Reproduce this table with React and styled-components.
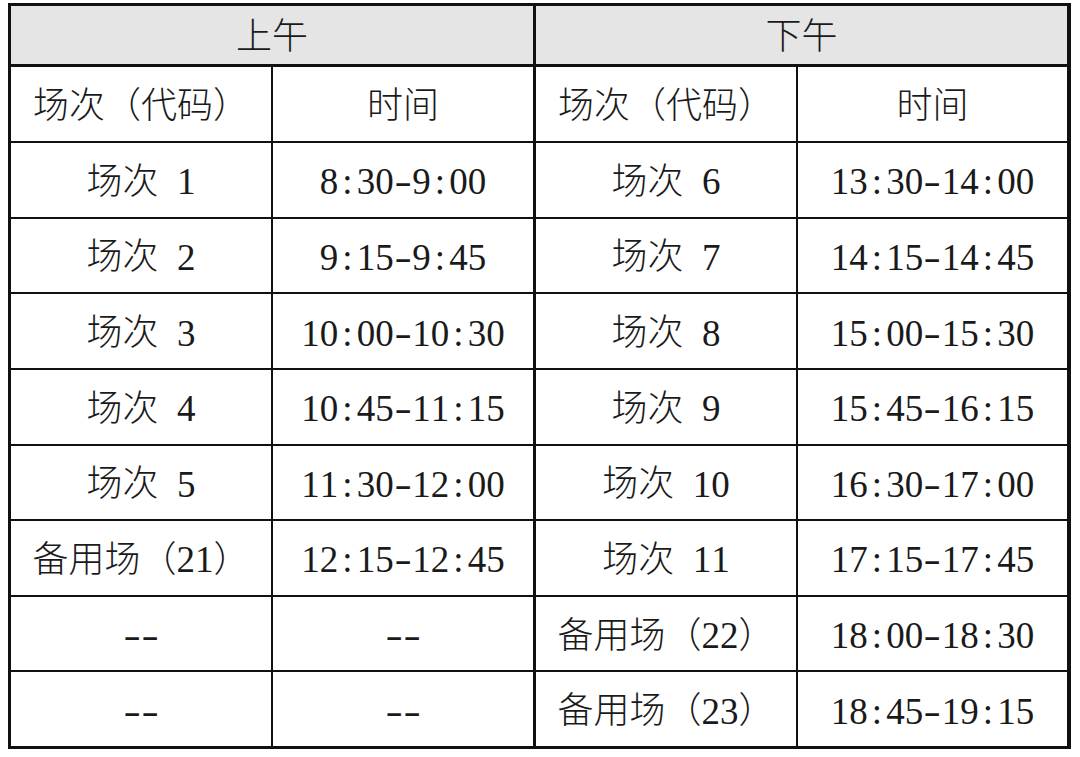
import React from "react";
import styled, { createGlobalStyle } from "styled-components";

const Global = createGlobalStyle`
  html, body { margin: 0; padding: 0; background: #ffffff; }
  body { font-family: "Liberation Serif", "Noto Sans CJK SC", serif; }
`;

const Page = styled.div`
  padding: 3px 0 0 8px;
  width: 1080px;
  height: 757px;
  box-sizing: border-box;
`;

const Table = styled.div`
  display: grid;
  grid-template-columns: 260px 261px 260px 269px;
  grid-template-rows: 59px 74px repeat(8, 1fr);
  gap: 2px;
  width: 1063px;
  height: 746px;
  box-sizing: border-box;
  background: #111;
  border-style: solid;
  border-color: #111;
  border-width: 3px 4px 3px 3px;
`;

const Cell = styled.div`
  display: flex;
  align-items: center;
  justify-content: center;
  box-sizing: border-box;
  background: ${(p) => (p.$head ? "#e5e5e5" : "#ffffff")};
  grid-column: ${(p) => (p.$span ? `span ${p.$span}` : "auto")};
  border-right: ${(p) => (p.$mid ? "1px solid #111" : "0")};
  border-bottom: ${(p) => (p.$head ? "1px solid #111" : "0")};
  color: #1a1a1a;
  font-family: "Liberation Serif", "Noto Sans CJK SC", serif;
  font-weight: 300;
  font-size: 36px;
  line-height: 1;
  padding-top: 4px;
  white-space: pre;
`;

const Glyph = styled.span`
  display: inline-block;
  width: 18.5px;
  text-align: center;
  font-family: "Liberation Serif", "Times New Roman", "Noto Serif", "DejaVu Serif", serif;
  font-weight: 400;
  font-size: 37px;
  line-height: 1;
  transform: ${(p) => (p.$dash ? "scaleX(1.4)" : "none")};
`;

function Text({ children }) {
  const s = String(children);
  const out = [];
  let buf = "";
  [...s].forEach((ch, i) => {
    if (ch.charCodeAt(0) < 128) {
      if (buf) {
        out.push(buf);
        buf = "";
      }
      out.push(
        <Glyph key={i} $dash={ch === "-"}>
          {ch}
        </Glyph>
      );
    } else {
      buf += ch;
    }
  });
  if (buf) out.push(buf);
  return <>{out}</>;
}

const rows = [
  ["场次 1", "8:30-9:00", "场次 6", "13:30-14:00"],
  ["场次 2", "9:15-9:45", "场次 7", "14:15-14:45"],
  ["场次 3", "10:00-10:30", "场次 8", "15:00-15:30"],
  ["场次 4", "10:45-11:15", "场次 9", "15:45-16:15"],
  ["场次 5", "11:30-12:00", "场次 10", "16:30-17:00"],
  ["备用场（21）", "12:15-12:45", "场次 11", "17:15-17:45"],
  ["--", "--", "备用场（22）", "18:00-18:30"],
  ["--", "--", "备用场（23）", "18:45-19:15"],
];

export default function App() {
  return (
    <>
      <Global />
      <Page>
        <Table>
          <Cell $head $span={2} $mid>
            上午
          </Cell>
          <Cell $head $span={2}>
            下午
          </Cell>
          <Cell>场次（代码）</Cell>
          <Cell $mid>时间</Cell>
          <Cell>场次（代码）</Cell>
          <Cell>时间</Cell>
          {rows.map((r, ri) =>
            r.map((c, ci) => (
              <Cell key={`${ri}-${ci}`} $mid={ci === 1}>
                <Text>{c}</Text>
              </Cell>
            ))
          )}
        </Table>
      </Page>
    </>
  );
}
